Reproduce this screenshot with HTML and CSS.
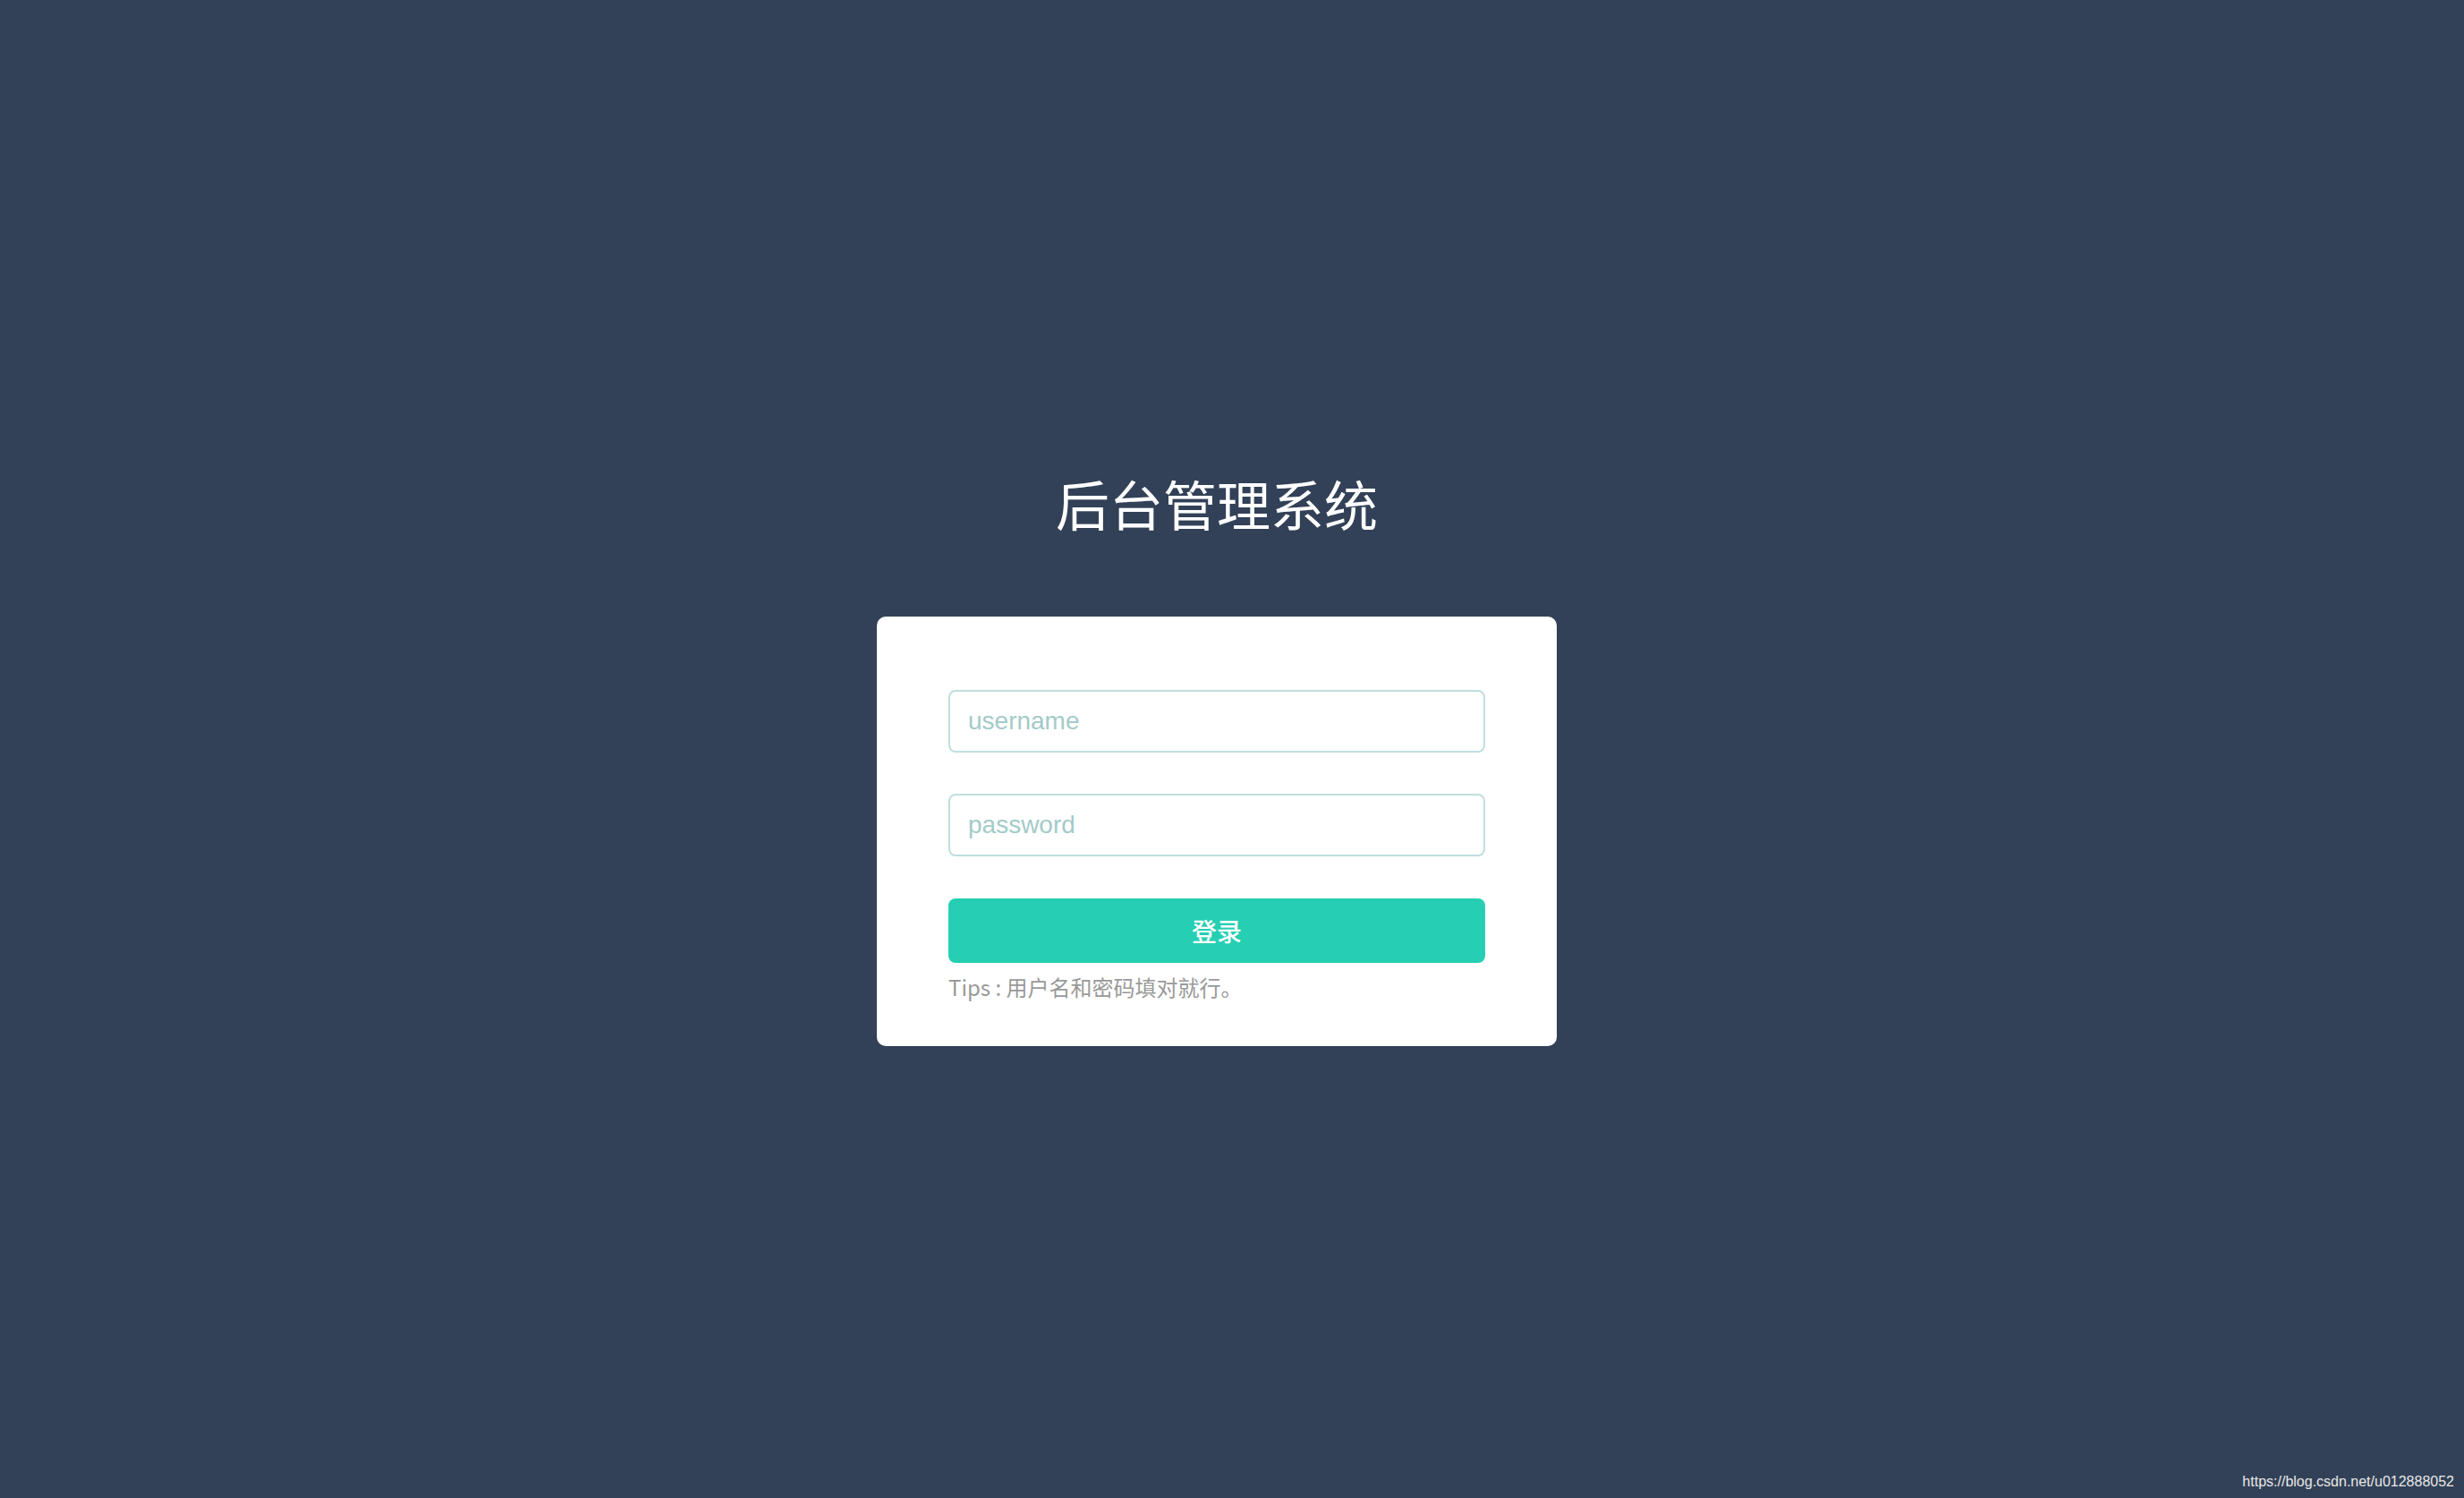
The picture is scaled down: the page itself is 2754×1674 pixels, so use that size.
FILE: index.html
```html
<!DOCTYPE html>
<html lang="zh-CN">
<head>
<meta charset="utf-8">
<title>后台管理系统</title>
<link rel="stylesheet" href="styles.css">
</head>
<body>
<div class="page">
  <h1 class="ms-title">后台管理系统</h1>
  <form class="ms-login" onsubmit="return false;">
    <input class="field field-user" type="text" placeholder="username">
    <input class="field field-pass" type="password" placeholder="password">
    <button class="login-btn" type="button">登录</button>
    <p class="tips">Tips : 用户名和密码填对就行。</p>
  </form>
</div>
<div class="watermark">https://blog.csdn.net/u012888052</div>
</body>
</html>
```

FILE: styles.css
```css
html, body {
  margin: 0;
  padding: 0;
  height: 100%;
}

body {
  background: #324157;
  overflow: hidden;
  font-family: "Noto Sans CJK SC", "Liberation Sans", sans-serif;
}

.page {
  box-sizing: border-box;
  min-height: 100vh;
  padding: 532px 34px 0 0;
  display: flex;
  flex-direction: column;
  align-items: center;
}

.ms-title {
  margin: 0;
  font-family: "Noto Sans CJK SC", sans-serif;
  font-size: 60px;
  line-height: 60px;
  font-weight: 400;
  color: #ffffff;
  text-align: center;
}

.ms-login {
  box-sizing: border-box;
  margin: 97px 0 0;
  width: 760px;
  height: 480px;
  padding: 82px 80px 0;
  background: #ffffff;
  border-radius: 10px;
  display: flex;
  flex-direction: column;
}

.field {
  box-sizing: border-box;
  display: block;
  width: 600px;
  height: 70px;
  margin: 0;
  padding: 0 20px;
  border: 2px solid #bfdfdd;
  border-radius: 8px;
  background: #ffffff;
  font-family: "Liberation Sans", "Noto Sans CJK SC", sans-serif;
  font-size: 28px;
  color: #1f2d3d;
  outline: none;
}

.field::placeholder {
  color: #a3cbc9;
}

.field-user {
  margin-bottom: 46px;
}

.field-pass {
  margin-bottom: 47px;
}

.login-btn {
  box-sizing: border-box;
  display: flex;
  align-items: center;
  justify-content: center;
  width: 600px;
  height: 72px;
  margin: 0;
  padding: 0;
  border: none;
  border-radius: 8px;
  background: #26cfb3;
  color: #ffffff;
  font-family: "Noto Sans CJK SC", sans-serif;
  font-size: 28px;
  font-weight: 500;
  cursor: pointer;
}

.tips {
  margin: 12px 0 0;
  font-family: "Noto Sans CJK SC", "Liberation Sans", sans-serif;
  font-size: 24px;
  line-height: 30px;
  color: #999999;
}

.watermark {
  position: absolute;
  right: 11px;
  bottom: 9px;
  font-family: "Liberation Sans", sans-serif;
  font-size: 16px;
  line-height: 18px;
  color: #e8e8e8;
}
```
